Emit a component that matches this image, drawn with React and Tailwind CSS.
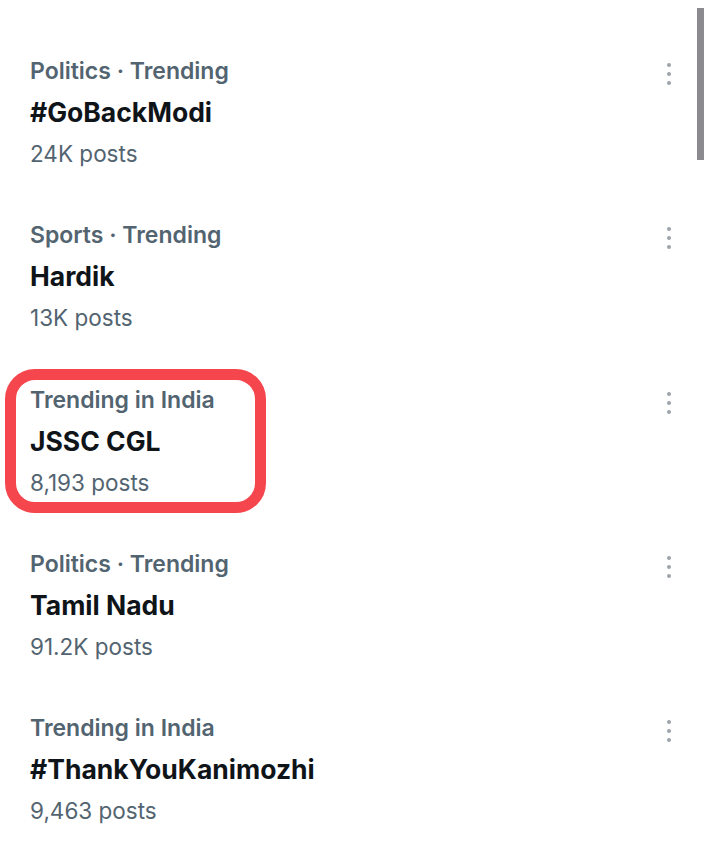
import { useState } from 'react';

const trends = [
  { id: 1, category: 'Politics · Trending', title: '#GoBackModi', posts: '24K posts' },
  { id: 2, category: 'Sports · Trending', title: 'Hardik', posts: '13K posts' },
  { id: 3, category: 'Trending in India', title: 'JSSC CGL', posts: '8,193 posts', highlight: true },
  { id: 4, category: 'Politics · Trending', title: 'Tamil Nadu', posts: '91.2K posts' },
  { id: 5, category: 'Trending in India', title: '#ThankYouKanimozhi', posts: '9,463 posts' },
];

function MoreDots() {
  return (
    <button className="flex flex-col items-center gap-[5px] px-2 py-1">
      <span className="w-[4px] h-[4px] rounded-full bg-[#9ca3a9]" />
      <span className="w-[4px] h-[4px] rounded-full bg-[#9ca3a9]" />
      <span className="w-[4px] h-[4px] rounded-full bg-[#9ca3a9]" />
    </button>
  );
}

function TrendRow({ trend }) {
  const text = (
    <div className="flex flex-col">
      <p className="text-[23px] leading-[41px] font-semibold text-[#536471]">{trend.category}</p>
      <p className="text-[26.5px] leading-[41px] font-bold text-[#0f1419]">{trend.title}</p>
      <p className="text-[22.5px] leading-[41px] text-[#536471]">{trend.posts}</p>
    </div>
  );

  return (
    <div className="flex items-start justify-between h-[164.25px] pl-[30px] pr-[25px]">
      {trend.highlight ? (
        <div className="-ml-[25px] -mt-[11px] w-[261px] h-[144px] pl-[14px] border-[11px] border-[#f5464d] rounded-[30px]">
          {text}
        </div>
      ) : (
        text
      )}
      <div className="pt-[8px]">
        <MoreDots />
      </div>
    </div>
  );
}

export default function App() {
  const [items] = useState(trends);

  return (
    <div className="relative w-[704px] h-[852px] overflow-hidden bg-white" style={{ fontFamily: 'Inter, "Noto Sans", sans-serif' }}>
      <div className="flex flex-col pt-[51px]">
        {items.map((t) => (
          <TrendRow key={t.id} trend={t} />
        ))}
      </div>
      {/* scrollbar thumb */}
      <div className="absolute right-0 top-[8px] w-[7px] h-[152px] bg-[#8a8a8f]" />
    </div>
  );
}
